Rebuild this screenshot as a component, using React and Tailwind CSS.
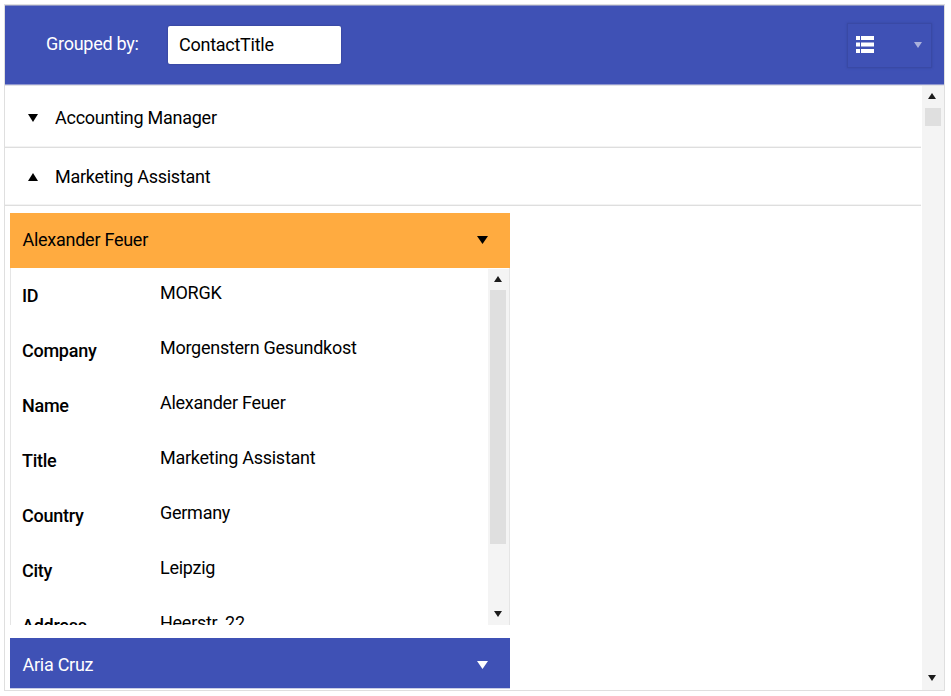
const fields = [
  ["ID", "MORGK"],
  ["Company", "Morgenstern Gesundkost"],
  ["Name", "Alexander Feuer"],
  ["Title", "Marketing Assistant"],
  ["Country", "Germany"],
  ["City", "Leipzig"],
  ["Address", "Heerstr. 22"],
];

function Triangle({ up = false, className = "" }) {
  return (
    <svg viewBox="0 0 10 8" preserveAspectRatio="none" className={`block shrink-0 fill-current ${className}`}>
      <path d={up ? "M0 8 L5 0 L10 8 Z" : "M0 0 L10 0 L5 8 Z"} />
    </svg>
  );
}

function GroupHeader({ title, open = false, className = "" }) {
  return (
    <div className={`flex items-center border-b border-[#dedede] pl-[23px] shadow-[inset_0_-1px_0_#f3f3f3] ${className}`}>
      <Triangle up={open} className="h-2 w-[10px]" />
      <span className="ml-[17px]">{title}</span>
    </div>
  );
}

function Scrollbar({ className = "", thumb, arrow = "" }) {
  return (
    <div className={`flex shrink-0 flex-col items-center bg-[#f4f4f4] text-[#1c1c1c] ${className}`}>
      <Triangle up className={`h-[6px] w-[8px] ${arrow}`} />
      <div className={`w-4 bg-[#dfdfdf] ${thumb}`} />
      <Triangle className={`mt-auto h-[6px] w-[8px] ${arrow}`} />
    </div>
  );
}

export default function App() {
  return (
    <div className="h-[696px] w-[951px] overflow-hidden bg-white pl-1 pt-1 font-['Roboto',sans-serif] text-[18px] leading-6 tracking-[-0.265px] text-black">
      <div className="flex h-[687px] w-[941px] flex-col overflow-hidden border border-[#dfdfdf]">
        <header className="flex h-[80px] shrink-0 items-center border-b border-b-[#8f97cf] border-t border-t-[#8b92c2] bg-[#3f51b5] pl-[41px] pr-3 text-white">
          <span className="w-[122px] whitespace-nowrap pb-[2px]">Grouped by:</span>
          <div className="flex h-[38px] w-[173px] items-center rounded-[2px] bg-white pl-[11px] text-black shadow-[0_0_2px_rgba(0,0,0,0.3)]">
            ContactTitle
          </div>
          <div className="ml-auto mt-px flex h-[45px] w-[85px] items-center justify-between border border-[#3949a5] pl-2 pr-[9px] shadow-[0_0_2px_#3546a0]">
            <svg width="18" height="17" viewBox="0 0 18 17" className="mb-[3px] fill-white">
              <path d="M0 0h4v4H0z M5 0h13v4H5z M0 6.5h4v4H0z M5 6.5h13v4H5z M0 13h4v4H0z M5 13h13v4H5z" />
            </svg>
            <Triangle className="mb-[2px] h-[6px] w-[8px] text-[#aab1dc]" />
          </div>
        </header>
        <div className="flex min-h-0 flex-1 border-t border-[#e2e2e6]">
          <main className="w-[916px] overflow-hidden">
            <GroupHeader title="Accounting Manager" className="h-[62px] pt-[2px]" />
            <GroupHeader title="Marketing Assistant" open className="h-[58px] pt-px" />
            <div className="flex w-[505px] flex-col pl-[5px] pt-[7px]">
              <div className="flex h-[55px] items-center justify-between bg-[#ffab40] pb-px pl-[12.5px] pr-[22px]">
                <span>Alexander Feuer</span>
                <Triangle className="h-2 w-[11px]" />
              </div>
              <div className="flex h-[356.5px] overflow-hidden border-x border-[#e5e5e5]">
                <div className="flex-1">
                  {fields.map(([label, value]) => (
                    <div key={label} className="flex h-[55px] items-start pl-[11px]">
                      <span className="w-[138px] pt-[16px] font-medium">{label}</span>
                      <span className="pt-[13px]">{value}</span>
                    </div>
                  ))}
                </div>
                <Scrollbar className="mt-px w-[21px] pb-[7.5px] pr-[1px] pt-[7px]" thumb="mt-[8px] h-[254px]" />
              </div>
              <div className="mt-[13.5px] flex h-[51px] items-center justify-between border-b border-[#c9cce5] bg-[#3f51b5] pl-[12.5px] pr-[22px] pt-[3px] text-white">
                <span>Aria Cruz</span>
                <Triangle className="h-2 w-[11px]" />
              </div>
            </div>
          </main>
          <Scrollbar className="ml-px w-[22px] pb-[9px] pr-px pt-[7px]" thumb="mt-[9px] h-[18px]" arrow="mr-px" />
        </div>
      </div>
    </div>
  );
}
